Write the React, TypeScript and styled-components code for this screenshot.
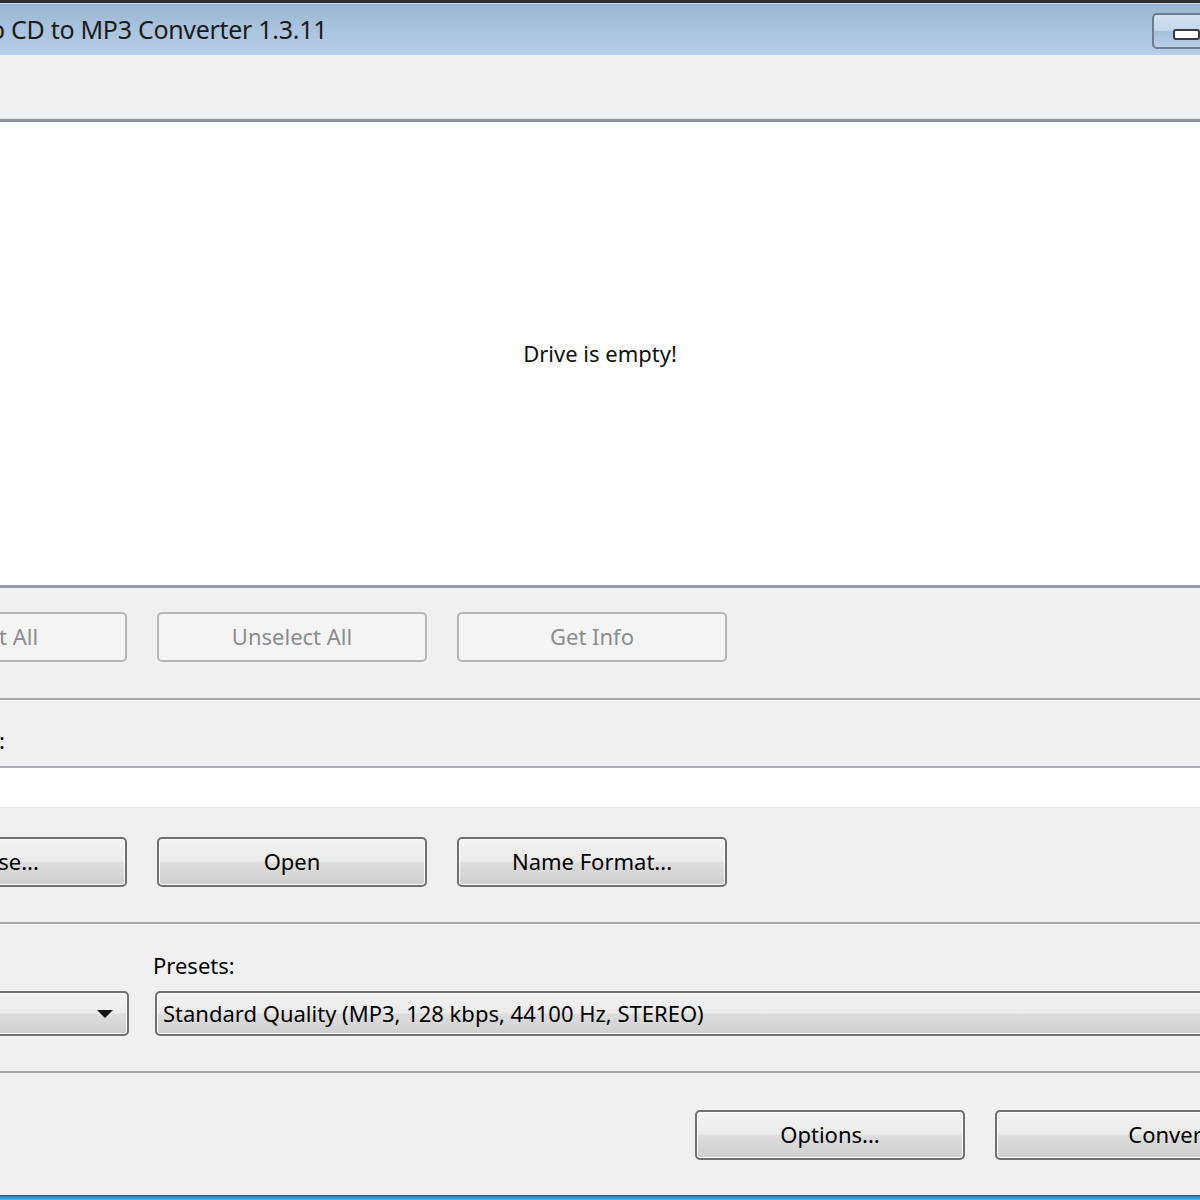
import React from "react";
import styled, { createGlobalStyle, css } from "styled-components";

const GlobalStyle = createGlobalStyle`
  html, body { margin: 0; padding: 0; background: #f0f0f0; }
  body { overflow: hidden; font-family: "Noto Sans", "Open Sans", sans-serif; }
`;

const Viewport = styled.div`
  width: 1200px;
  height: 1200px;
  overflow: hidden;
  position: relative;
  background: #f0f0f0;
`;

const Window = styled.div`
  width: 1546px;
  margin-left: -173px;
  display: flex;
  flex-direction: column;
  font-size: 22px;
  color: #000;
`;

const TopEdge = styled.div`
  height: 3px;
  background: #2e2e2e;
`;

const TitleBar = styled.div`
  height: 52px;
  display: flex;
  align-items: center;
  background: linear-gradient(#9ab6d3 0%, #a9c2dd 45%, #b6cee8 100%);
  border-top: 1px solid #c9d8e8;
  box-sizing: border-box;
`;

const Title = styled.div`
  padding-left: 111px;
  font-size: 25px;
  color: #1c1a1a;
  letter-spacing: -0.3px;
  white-space: nowrap;
  padding-bottom: 2px;
`;

const Controls = styled.div`
  margin-left: auto;
  width: 221px;
  height: 36px;
  display: flex;
  align-self: flex-start;
  margin-top: 9px;
  overflow: hidden;
`;

const CaptionButton = styled.div<{ $first?: boolean }>`
  width: 58px;
  height: 36px;
  flex-shrink: 0;
  box-sizing: border-box;
  border: 2px solid #6d7c8f;
  border-radius: ${(p) => (p.$first ? "5px 0 0 5px" : "0")};
  background: linear-gradient(#d3e2f2 0%, #c3d6ec 48%, #a6bfdc 52%, #b9d0ea 100%);
  display: flex;
  align-items: center;
  justify-content: center;
  padding-top: 6px;
  padding-left: ${(p) => (p.$first ? "10px" : "0")};
`;

const MinGlyph = styled.div`
  width: 23px;
  height: 7px;
  background: #fff;
  border: 2px solid #3b3b3b;
  border-radius: 3px;
`;

const Toolbar = styled.div`
  height: 64px;
  background: #f0f0f0;
`;

const ListView = styled.div`
  height: 463px;
  background: #fff;
  border-top: 3px solid #8e96a2;
  border-bottom: 3px solid #959ba3;
  box-shadow: 0 -1px 0 #dfe2e6;
  display: flex;
  align-items: center;
  justify-content: center;
`;

const EmptyText = styled.div`
  font-size: 22px;
  color: #111;
  margin-top: -2px;
`;

const Section = styled.div<{ $h: number; $top: number; $align?: string }>`
  height: ${(p) => p.$h}px;
  box-sizing: border-box;
  padding: ${(p) => p.$top}px 30px 0 30px;
  display: flex;
  gap: 30px;
  justify-content: ${(p) => p.$align || "flex-start"};
  align-items: flex-start;
  background: #f0f0f0;
`;

const Separator = styled.div`
  height: 2px;
  background: #a7a7a7;
  box-shadow: 0 1px 0 #fff;
`;

const Button = styled.div<{ $disabled?: boolean; $w?: number }>`
  width: ${(p) => p.$w ?? 270}px;
  height: 50px;
  box-sizing: border-box;
  border-radius: 5px;
  display: flex;
  align-items: center;
  justify-content: center;
  font-size: 22px;
  padding-bottom: 2px;
  flex-shrink: 0;
  ${(p) =>
    p.$disabled
      ? css`
          border: 2px solid #b3b6b9;
          background: #f4f4f4;
          color: #8a8c90;
        `
      : css`
          border: 2px solid #707070;
          background: linear-gradient(#f3f3f3 0%, #ebebeb 48%, #dddddd 52%, #cfcfcf 100%);
          color: #000;
          box-shadow: inset 0 0 0 1px #fbfbfb;
        `}
`;

const LabelRow = styled.div`
  height: 66px;
  box-sizing: border-box;
  padding: 25px 30px 0 27px;
  font-size: 22px;
`;

const Edit = styled.div`
  height: 42px;
  background: #fff;
  border-top: 2px solid #abadb3;
  border-bottom: 1px solid #e3e9ef;
  box-sizing: border-box;
`;

const PresetsSection = styled.div`
  height: 147px;
  box-sizing: border-box;
  padding: 27px 30px 0 30px;
  display: grid;
  grid-template-columns: 272px 1fr;
  align-content: start;
  column-gap: 26px;
  row-gap: 11px;
`;

const FieldLabel = styled.div`
  font-size: 22px;
  height: 29px;
  line-height: 29px;
  margin-left: -2px;
`;

const Combo = styled.div`
  height: 45px;
  box-sizing: border-box;
  border: 2px solid #707070;
  border-radius: 5px;
  background: linear-gradient(#f3f3f3 0%, #ebebeb 48%, #dddddd 52%, #cfcfcf 100%);
  box-shadow: inset 0 0 0 1px #fbfbfb;
  display: flex;
  align-items: center;
  padding: 0 14px 2px 6px;
  font-size: 22px;
  white-space: nowrap;
`;

const Arrow = styled.div`
  margin-left: auto;
  width: 0;
  height: 0;
  border-left: 8px solid transparent;
  border-right: 8px solid transparent;
  border-top: 8px solid #111;
  margin-top: 3px;
`;

const BottomEdge = styled.div`
  height: 5px;
  background: linear-gradient(#3d4b55 0%, #2c90c8 40%, #45b7e8 100%);
`;

export default function App() {
  return (
    <>
      <GlobalStyle />
      <Viewport>
        <Window>
          <TopEdge />
          <TitleBar>
            <Title>Audio CD to MP3 Converter 1.3.11</Title>
            <Controls>
              <CaptionButton $first>
                <MinGlyph />
              </CaptionButton>
              <CaptionButton />
            </Controls>
          </TitleBar>
          <Toolbar />
          <ListView>
            <EmptyText>Drive is empty!</EmptyText>
          </ListView>
          <Section $h={110} $top={24}>
            <Button $disabled>Select All</Button>
            <Button $disabled>Unselect All</Button>
            <Button $disabled>Get Info</Button>
          </Section>
          <Separator />
          <LabelRow>Output Folder:</LabelRow>
          <Edit />
          <Section $h={114} $top={29}>
            <Button>Browse...</Button>
            <Button>Open</Button>
            <Button>Name Format...</Button>
          </Section>
          <Separator />
          <PresetsSection>
            <FieldLabel>Format:</FieldLabel>
            <FieldLabel>Presets:</FieldLabel>
            <Combo>
              MP3
              <Arrow />
            </Combo>
            <Combo>Standard Quality (MP3, 128 kbps, 44100 Hz, STEREO)</Combo>
          </PresetsSection>
          <Separator />
          <Section $h={122} $top={37} $align="flex-end">
            <Button>Options...</Button>
            <Button $w={348}>Convert</Button>
          </Section>
          <BottomEdge />
        </Window>
      </Viewport>
    </>
  );
}
